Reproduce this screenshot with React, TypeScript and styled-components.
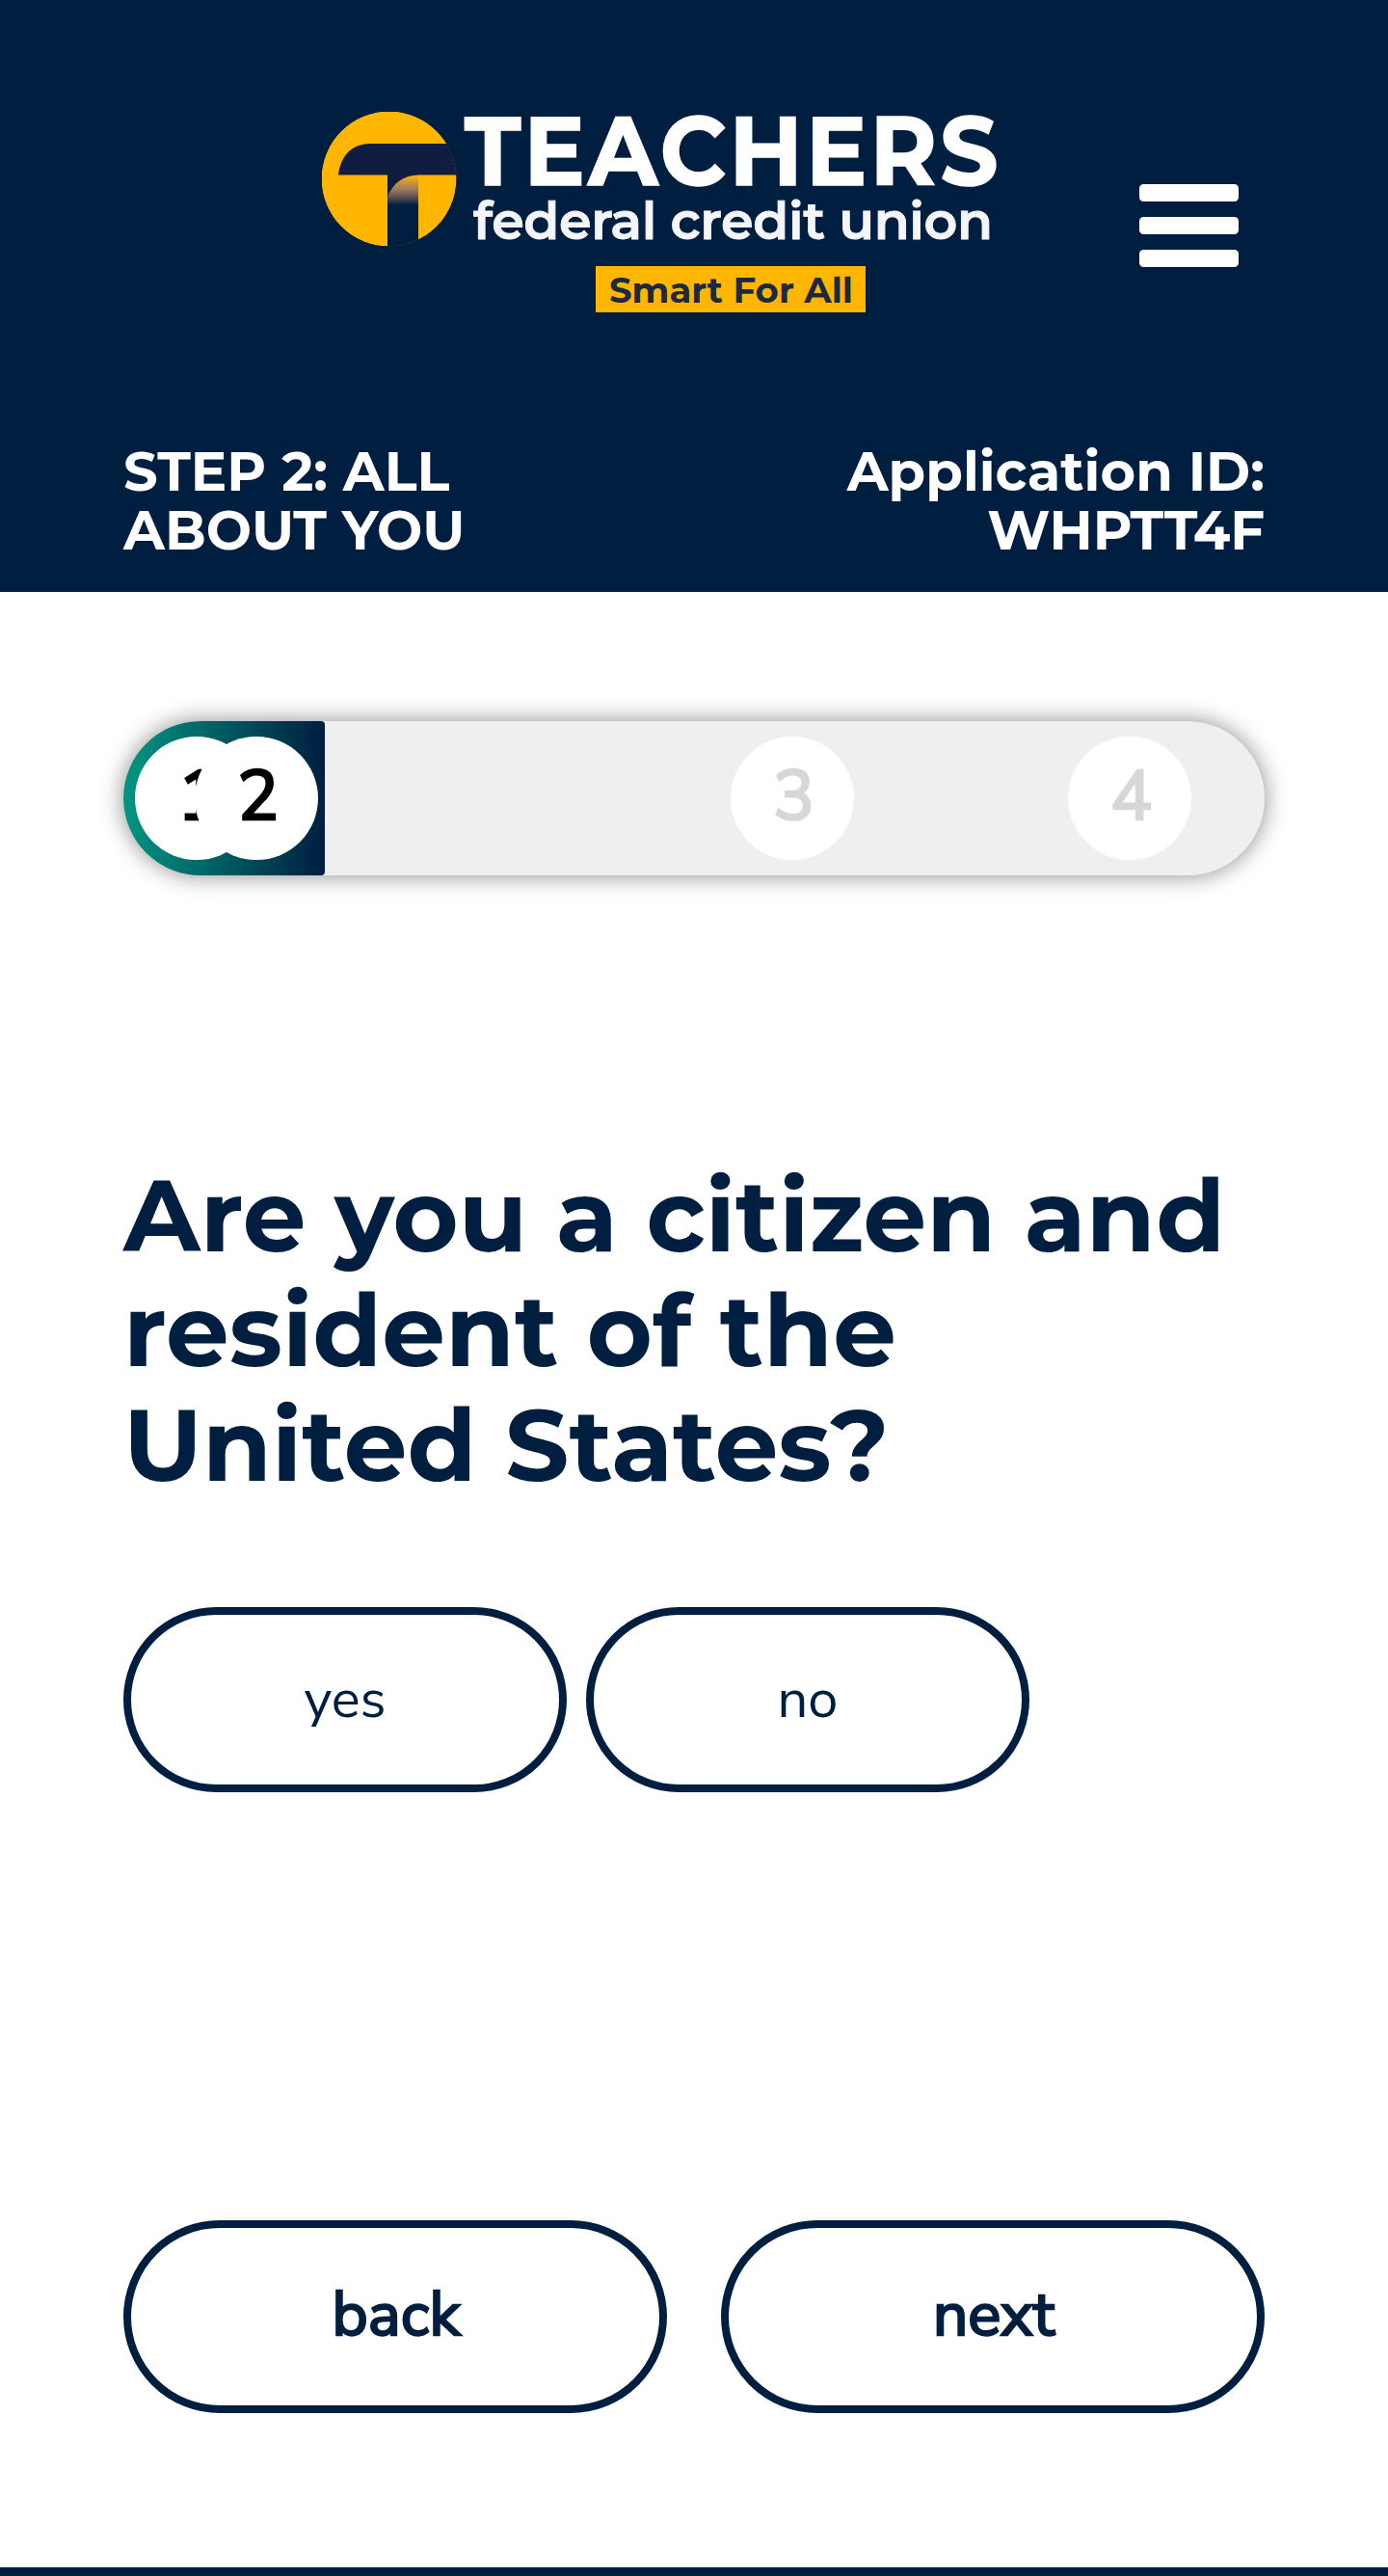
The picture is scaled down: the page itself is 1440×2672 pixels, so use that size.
import React from "react";
import styled, { createGlobalStyle } from "styled-components";

const navy = "#001e40";
const gold = "#ffb600";
const headingFont = '"Montserrat", "Inter", sans-serif';
const bodyFont = '"Nunito Sans", "Open Sans", sans-serif';

const GlobalStyle = createGlobalStyle`
  *, *::before, *::after { box-sizing: border-box; }
  body {
    margin: 0;
    background: #fff;
    color: ${navy};
    font-family: ${bodyFont};
  }
`;

const Page = styled.div`
  display: flex;
  flex-direction: column;
  height: 2672px;
  overflow: hidden;
`;

const Header = styled.header`
  flex: none;
  display: flex;
  flex-direction: column;
  height: 613.6px;
  padding: 116px 128px 0;
  background: ${navy};
  color: #fff;
`;

const BrandRow = styled.div`
  display: flex;
  align-items: flex-start;
  height: 343px;
  padding-left: 206px;
`;

const LogoSvg = styled.svg`
  flex: none;
  display: block;
  font-family: ${headingFont};
`;

const MenuButton = styled.button`
  display: flex;
  flex-direction: column;
  gap: 16.4px;
  width: 103px;
  margin: 75px 0 0 148px;
  padding: 0;
  border: 0;
  background: none;
`;

const MenuBar = styled.span`
  height: 17.7px;
  border-radius: 4.5px;
  background: #fff;
`;

const StatusRow = styled.div`
  display: flex;
  justify-content: space-between;
  font: 700 56px/61px ${headingFont};
`;

const StatusText = styled.div<{ $align: "left" | "right" }>`
  width: 440px;
  text-align: ${(p) => p.$align};
`;

const Main = styled.main`
  flex: 1;
  padding: 134.4px 128px 0;
`;

const Track = styled.div`
  position: relative;
  display: flex;
  align-items: center;
  height: 160px;
  padding-left: 12px;
  border-radius: 80px;
  overflow: hidden;
  background: #efefef;
  box-shadow: 0 0 24px rgba(0, 0, 0, 0.46);
`;

const TrackFill = styled.div`
  position: absolute;
  inset: 0 auto 0 0;
  width: 209px;
  border-radius: 0 4px 4px 0;
  background: linear-gradient(90deg, #009681, ${navy});
`;

const Step = styled.div<{ $gap: number; $reached: boolean }>`
  position: relative;
  flex: none;
  display: flex;
  align-items: center;
  justify-content: center;
  width: 128px;
  height: 128px;
  margin-left: ${(p) => p.$gap}px;
  padding: 0 0 3px 3px;
  border-radius: 50%;
  background: #fff;
  color: ${(p) => (p.$reached ? "#000" : "#d7d7d7")};
  font-size: 72px;
  -webkit-text-stroke: 2.6px currentColor;
`;

const Question = styled.h1`
  margin: 293.4px 0 0;
  font: 700 104px/119px ${headingFont};
  letter-spacing: 0.06px;
`;

const Answers = styled.div`
  display: flex;
  gap: 20px;
  margin-top: 108.6px;
`;

const PillButton = styled.button`
  border: 8px solid ${navy};
  background: #fff;
  color: ${navy};
  font-family: ${bodyFont};
`;

const AnswerButton = styled(PillButton)`
  width: 460px;
  height: 192px;
  padding: 0;
  border-radius: 96px;
  font-size: 56px;
`;

const Navigation = styled.nav`
  display: flex;
  justify-content: space-between;
  margin-top: 444px;
`;

const NavButton = styled(PillButton)`
  width: 564px;
  height: 200px;
  padding: 0 0 3px 2px;
  border-radius: 100px;
  font-size: 64px;
  -webkit-text-stroke: 2.4px currentColor;
`;

const Footer = styled.footer`
  flex: none;
  height: 9px;
  background: ${navy};
`;

function Logo() {
  return (
    <LogoSvg width="700" height="208" viewBox="0 0 700 208" role="img" aria-label="Teachers Federal Credit Union">
      <defs>
        <clipPath id="disc">
          <circle cx="69.5" cy="69.5" r="70" />
        </clipPath>
        <linearGradient id="stem" x1="0" y1="66" x2="0" y2="97" gradientUnits="userSpaceOnUse">
          <stop offset="0.05" stopColor="#f0ab1c" />
          <stop offset="0.45" stopColor="#a07d5e" />
          <stop offset="0.75" stopColor="#554a55" />
          <stop offset="1" stopColor={navy} />
        </linearGradient>
      </defs>
      <g clipPath="url(#disc)">
        <circle cx="69.5" cy="69.5" r="70" fill={gold} />
        <path d="M17 65.5C19 47 30 33 50 33H140V65.5Z" fill="#101c40" />
        <rect x="68" y="65" width="32" height="76" fill="url(#stem)" />
        <path d="M68 64H100V65.5C84 66 74 74 68 88Z" fill="#101c40" />
      </g>
      <g transform="translate(148 75.5) scale(0.935 1)">
        <text fontSize="101" fontWeight="700" fill="#fff" stroke="#fff" strokeWidth="1.6" textLength="592">TEACHERS</text>
      </g>
      <text x="157" y="131.800" fontSize="54" fontWeight="600" fill="#f4f5f8" stroke="#f4f5f8" strokeWidth="0.900" textLength="539">federal credit union</text>
      <rect x="284" y="160" width="280" height="48" fill={gold} />
      <text x="298" y="198" fontSize="37" fontWeight="700" fill="#1c2a40" textLength="253">Smart For All</text>
    </LogoSvg>
  );
}

const steps = [
  { label: "1", gap: 0, reached: true },
  { label: "2", gap: -66, reached: true },
  { label: "3", gap: 428, reached: false },
  { label: "4", gap: 222, reached: false },
];

export default function App() {
  return (
    <>
      <GlobalStyle />
      <Page>
        <Header>
          <BrandRow>
            <Logo />
            <MenuButton aria-label="Menu">
              <MenuBar />
              <MenuBar />
              <MenuBar />
            </MenuButton>
          </BrandRow>
          <StatusRow>
            <StatusText $align="left">STEP 2: ALL<br />ABOUT YOU</StatusText>
            <StatusText $align="right">Application ID:<br />WHPTT4F</StatusText>
          </StatusRow>
        </Header>
        <Main>
          <Track>
            <TrackFill />
            {steps.map((s) => (
              <Step key={s.label} $gap={s.gap} $reached={s.reached}>{s.label}</Step>
            ))}
          </Track>
          <Question>
            Are you a citizen and<br />resident of the<br />United States?
          </Question>
          <Answers>
            <AnswerButton>yes</AnswerButton>
            <AnswerButton>no</AnswerButton>
          </Answers>
          <Navigation>
            <NavButton>back</NavButton>
            <NavButton>next</NavButton>
          </Navigation>
        </Main>
        <Footer />
      </Page>
    </>
  );
}
